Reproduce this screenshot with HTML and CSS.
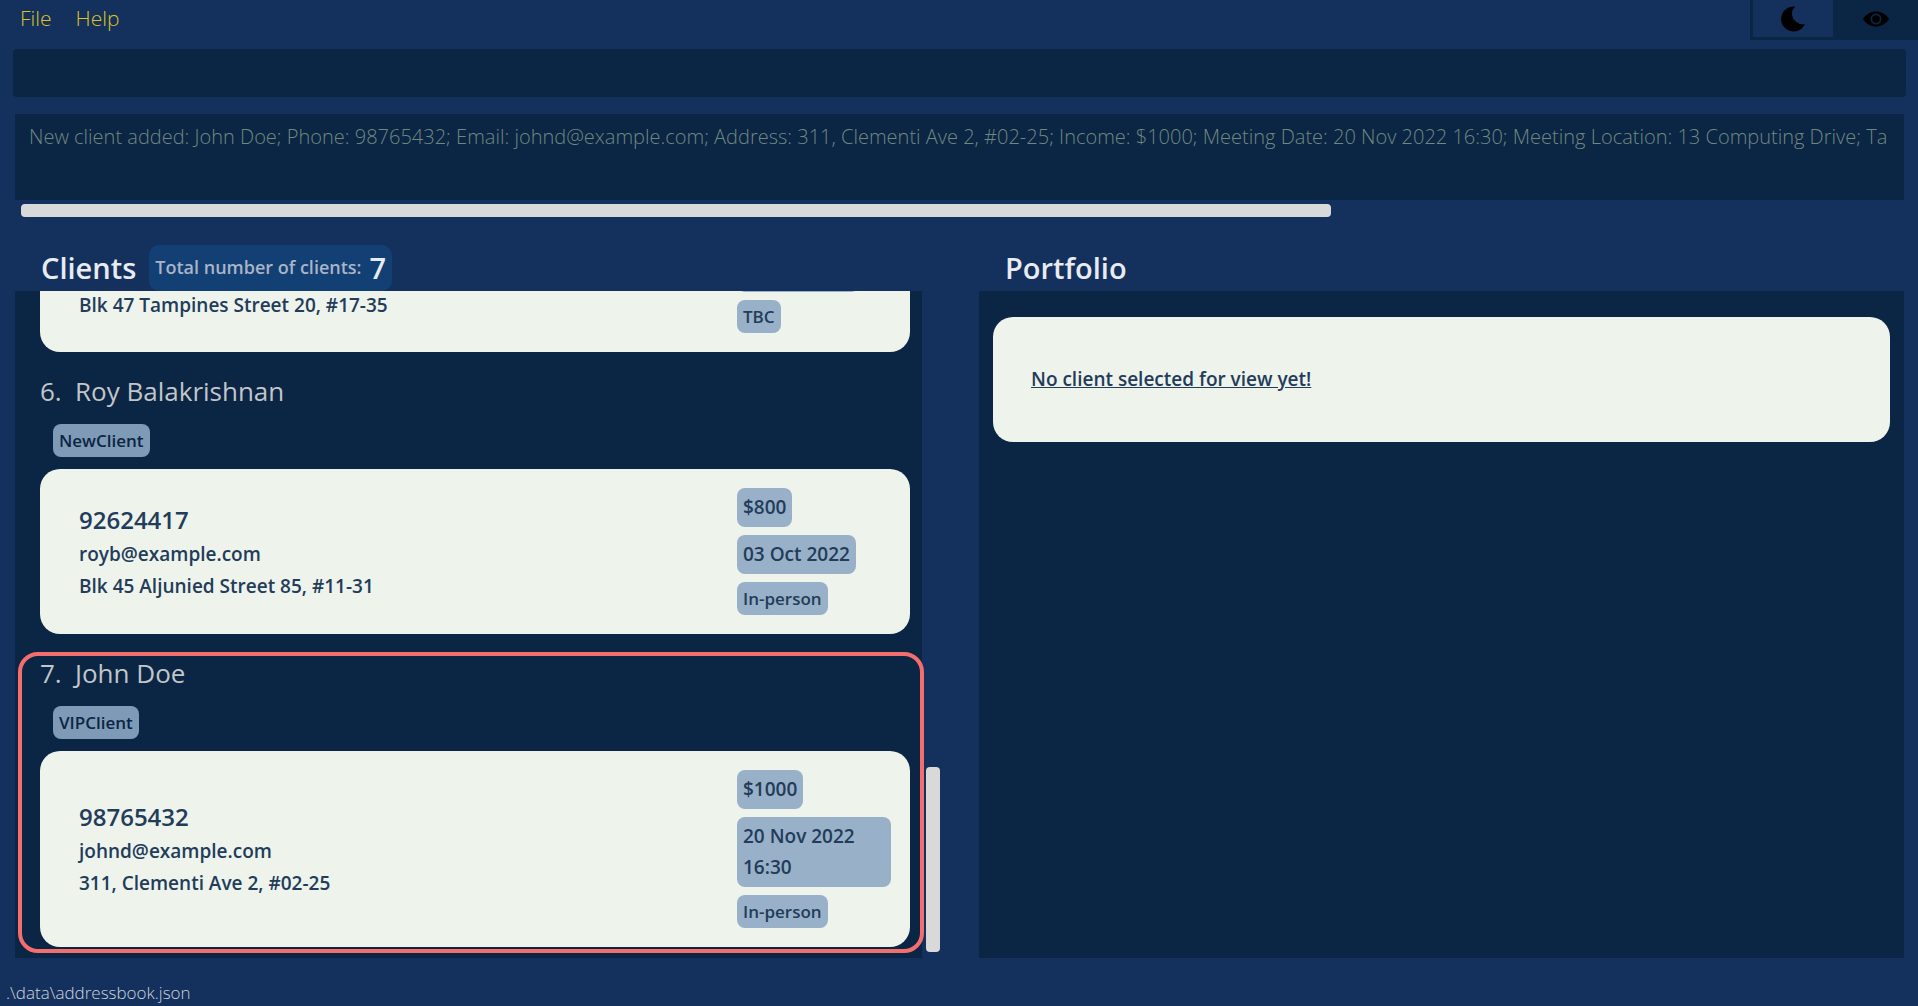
FILE: index.html
```html
<!DOCTYPE html>
<html lang="en">
<head>
<meta charset="utf-8">
<title>Address book</title>
<link rel="stylesheet" href="styles.css">
</head>
<body>
<header class="menubar">
  <nav class="menus">
    <button type="button" class="menu">File</button>
    <button type="button" class="menu">Help</button>
  </nav>
  <div class="toggles">
    <button type="button" class="toggle toggle-on" aria-label="Dark mode">
      <svg class="icon" width="24" height="26" viewBox="0 0 24 26"><path d="M14.500 .5H12A12.500 12.500 0 1 0 23.500 19V18.300H21.500A11 11 0 0 1 11 9C10.600 5.500 12 2 14.500 .5Z"/></svg>
    </button>
    <button type="button" class="toggle" aria-label="View">
      <svg class="icon" width="26" height="16" viewBox="0 0 26 16"><path fill-rule="evenodd" d="M0 8C3 3 8 .5 13 .5S23 3 26 8C23 13 18 15.500 13 15.500S3 13 0 8ZM13 2.500A5.500 5.500 0 1 0 13 13.500A5.500 5.500 0 1 0 13 2.500ZM13 4.200A3.800 3.800 0 1 1 13 11.800A3.800 3.800 0 1 1 13 4.200Z"/></svg>
    </button>
  </div>
</header>

<input class="command" type="text" aria-label="Command">

<section class="result">
  <textarea class="result-text" aria-label="Result" readonly wrap="off">New client added: John Doe; Phone: 98765432; Email: johnd@example.com; Address: 311, Clementi Ave 2, #02-25; Income: $1000; Meeting Date: 20 Nov 2022 16:30; Meeting Location: 13 Computing Drive; Ta</textarea>
  <div class="hscroll"><div class="hthumb"></div></div>
</section>

<main class="panes">
  <section class="pane">
    <div class="pane-head">
      <h2 class="title">Clients</h2>
      <p class="count">Total number of clients: <strong class="count-value">7</strong></p>
    </div>
    <div class="scroller">
      <ol class="clients">
        <li class="client">
          <div class="card">
            <div class="details details-end"><p>Blk 47 Tampines Street 20, #17-35</p></div>
            <div class="chips">
              <span class="chip chip-blank"></span>
              <span class="chip chip-small">TBC</span>
            </div>
          </div>
        </li>
        <li class="client">
          <h3 class="name"><span class="index">6.</span>Roy Balakrishnan</h3>
          <span class="tag">NewClient</span>
          <div class="card">
            <div class="details">
              <p class="phone">92624417</p>
              <p>royb@example.com</p>
              <p>Blk 45 Aljunied Street 85, #11-31</p>
            </div>
            <div class="chips">
              <span class="chip">$800</span>
              <span class="chip">03 Oct 2022</span>
              <span class="chip chip-small">In-person</span>
            </div>
          </div>
        </li>
        <li class="client client-selected">
          <h3 class="name"><span class="index">7.</span>John Doe</h3>
          <span class="tag">VIPClient</span>
          <div class="card">
            <div class="details">
              <p class="phone">98765432</p>
              <p>johnd@example.com</p>
              <p>311, Clementi Ave 2, #02-25</p>
            </div>
            <div class="chips">
              <span class="chip">$1000</span>
              <span class="chip">20 Nov 2022 16:30</span>
              <span class="chip chip-small">In-person</span>
            </div>
          </div>
        </li>
      </ol>
      <div class="vscroll"><div class="vthumb"></div></div>
    </div>
  </section>
  <section class="pane">
    <div class="pane-head"><h2 class="title">Portfolio</h2></div>
    <div class="portfolio">
      <div class="notice">No client selected for view yet!</div>
    </div>
  </section>
</main>

<footer class="status">.\data\addressbook.json</footer>
</body>
</html>
```
FILE: styles.css
```css
* { box-sizing: border-box; }

body {
  margin: 0;
  height: 100vh;
  display: flex;
  flex-direction: column;
  background: #14305c;
  color: #223c5a;
  font-family: "Open Sans", "Noto Sans", sans-serif;
  font-size: 19px;
  overflow: hidden;
}

h2, h3, p, ol { margin: 0; padding: 0; }
button, input, textarea { font: inherit; border: 0; margin: 0; }

.menubar { display: flex; justify-content: space-between; height: 40px; }
.menus { display: flex; gap: 24px; padding-left: 20px; }
.menu {
  padding: 0;
  height: 36px;
  background: none;
  color: #dcc423;
  font-size: 21px;
  font-weight: 300;
}
.toggles {
  display: grid;
  grid-template-columns: 80px 1fr;
  width: 168px;
  padding: 0 0 3px 3px;
  background: #0b2544;
}
.toggle {
  display: flex;
  align-items: center;
  justify-content: center;
  padding: 0;
  background: none;
}
.toggle-on { background: #14305c; }
.icon { fill: #000; }

.command {
  height: 48px;
  margin: 9px 12px 0 13px;
  padding: 0 12px;
  border-radius: 4px;
  background: #0b2544;
  color: #dcc423;
}

.result { margin: 17px 14px 0 15px; }
.result-text {
  display: block;
  width: 100%;
  height: 86px;
  padding: 8px 0 0 14px;
  resize: none;
  overflow: hidden;
  background: #0b2544;
  color: #708880;
  font-size: 20px;
  font-weight: 300;
  line-height: 30px;
}
.hscroll { padding: 4px 12px 0 6px; }
.hthumb { width: 70%; height: 13px; border-radius: 4px; background: #d9d9d9; }

.panes {
  flex: 1;
  min-height: 0;
  display: grid;
  grid-template-columns: 927fr 925fr;
  gap: 37px;
  padding: 0 14px 0 15px;
  margin-top: 28px;
}
.pane { display: flex; flex-direction: column; min-height: 0; min-width: 0; }
.pane-head { display: flex; align-items: center; gap: 13px; height: 46px; padding-left: 26px; }
.title { color: #e8ebf0; font-size: 29px; font-weight: 600; line-height: 46px; }
.count {
  display: flex;
  align-items: center;
  gap: 8px;
  height: 46px;
  padding: 0 6px 2px;
  border-radius: 10px;
  background: #123f74;
  color: #a9b5c6;
  font-size: 18px;
  font-weight: 600;
}
.count-value { color: #e8ebf0; font-size: 29px; font-weight: 600; }

.scroller { flex: 1; min-height: 0; display: flex; }
.clients {
  flex: 1;
  display: flex;
  flex-direction: column;
  justify-content: flex-end;
  gap: 12px;
  padding-bottom: 5px;
  list-style: none;
  background: #0b2544;
  overflow-x: visible;
  overflow-y: clip;
}
.client {
  margin: 0 -2px 0 3px;
  padding: 0 10px 2px 18px;
  border: 4px solid transparent;
  border-radius: 20px;
}
.client-selected { border-color: #f56e6e; }
.name {
  display: flex;
  margin-bottom: 16px;
  color: #c2c6c9;
  font-size: 26px;
  font-weight: 400;
  line-height: 34px;
}
.index { width: 35px; }
.tag, .chip {
  display: block;
  width: fit-content;
  padding: 4px 6px;
  border-radius: 8px;
  font-weight: 600;
}
.tag {
  margin: 0 0 12px 13px;
  background: #7f9ab6;
  color: #0b2544;
  font-size: 17px;
  line-height: 25px;
}
.card {
  display: grid;
  grid-template-columns: 1fr 154px;
  padding: 19px 19px 19px 39px;
  border-radius: 20px;
  background: #eef3ec;
}
.details { align-self: center; font-weight: 600; line-height: 32px; }
.details-end { align-self: end; padding-bottom: 12px; }
.phone { font-size: 24px; line-height: 36px; }
.chips { display: flex; flex-direction: column; gap: 8px; }
.chip { background: #98b0c8; line-height: 31px; }
.chip-small { font-size: 17px; line-height: 25px; }
.chip-blank { width: 122px; height: 39px; }

.vscroll { width: 20px; display: flex; flex-direction: column; justify-content: flex-end; padding: 0 2px 6px 4px; }
.vthumb { height: 28%; border-radius: 4px; background: #d9d9d9; }

.portfolio { flex: 1; padding: 26px 14px; background: #0b2544; }
.notice {
  padding: 46px 38px;
  border-radius: 20px;
  background: #eef3ec;
  font-weight: 600;
  line-height: 33px;
  text-decoration: underline;
}

.status {
  height: 48px;
  padding: 22px 6px 0;
  color: #cdd4de;
  font-size: 17px;
  font-weight: 300;
  line-height: 26px;
}
```
